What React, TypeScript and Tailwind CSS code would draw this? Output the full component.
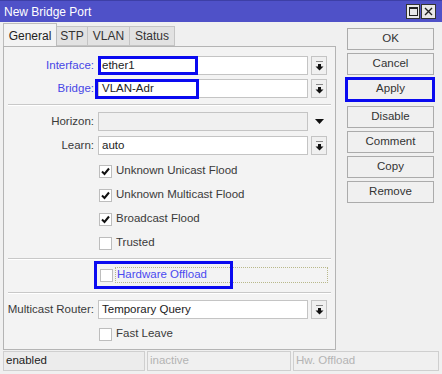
import React from 'react'

const DropButton = () => (
  <div className="ml-[3px] flex h-[19px] w-[16px] items-center justify-center border border-[#c4c4c4] bg-[#f0f0f0]">
    <svg width="9" height="10" viewBox="0 0 9 10">
      <rect x="1" y="0" width="7" height="1" fill="#8a8a8a" />
      <rect x="3" y="3" width="3" height="3" fill="#111" />
      <path d="M0.5 5.5 L8.5 5.5 L4.5 9.5 Z" fill="#111" />
    </svg>
  </div>
)

const Check = ({ checked }: { checked?: boolean }) => (
  <div className="flex h-[13px] w-[13px] items-center justify-center border border-[#bdbdbd] bg-white">
    {checked && (
      <svg width="9" height="9" viewBox="0 0 9 9">
        <path d="M1 4.5 L3.5 7 L8 1.5" stroke="#111" strokeWidth="2" fill="none" />
      </svg>
    )}
  </div>
)

const Sep = ({ className }: { className: string }) => (
  <div className={`mx-[4px] h-[2px] border-t border-[#c8c8c8] border-b border-b-white ${className}`} />
)

const Label = ({ text, blue }: { text: string; blue?: boolean }) => (
  <div
    className={`flex w-[94px] shrink-0 justify-end whitespace-nowrap pr-[4px] ${
      blue ? 'text-[#4646e6]' : 'text-[#3a3a3a]'
    }`}
  >
    {text}
  </div>
)

const Field = ({ value, disabled }: { value?: string; disabled?: boolean }) => (
  <div
    className={`flex h-[19px] w-[210px] items-center border border-[#c4c4c4] pl-[3px] text-[#222] ${
      disabled ? 'bg-[#f0f0f0]' : 'bg-white'
    }`}
  >
    {value}
  </div>
)

const CheckRow = ({ text, checked, className }: { text: string; checked?: boolean; className?: string }) => (
  <div className={`flex h-[24px] items-center pl-[95px] ${className ?? ''}`}>
    <Check checked={checked} />
    <span className="ml-[4px] text-[#3a3a3a]">{text}</span>
  </div>
)

const SideButton = ({ text }: { text: string }) => (
  <div className="flex h-[22px] w-[87px] items-center justify-center border border-[#ababab] bg-[#f0f0f0] text-[#333]">
    {text}
  </div>
)

export default function App() {
  return (
    <div className="flex h-[374px] w-[442px] flex-col overflow-hidden bg-[#f0f0f0] font-['Liberation_Sans',Arial,sans-serif] text-[11.5px] leading-none text-[#333]">
      {/* title bar */}
      <div className="flex h-[22px] items-center border-t border-[#3d3fa6] bg-[#4f51c8] pl-[4px] pr-[6px] text-white">
        <span className="text-[12px]">New Bridge Port</span>
        <div className="ml-auto flex gap-[1px]">
          <div className="flex h-[15px] w-[14px] items-center justify-center border border-[#333] bg-[#e8e8e8]">
            <div className="h-[9px] w-[9px] border border-t-2 border-[#222]" />
          </div>
          <div className="flex h-[15px] w-[15px] items-center justify-center border border-[#333] bg-[#e8e8e8]">
            <svg width="9" height="9" viewBox="0 0 9 9">
              <path d="M1 1 L8 8 M8 1 L1 8" stroke="#222" strokeWidth="1.4" />
            </svg>
          </div>
        </div>
      </div>

      <div className="flex h-[328px]">
        {/* left: tabs + panel */}
        <div className="ml-[3px] flex w-[333px] flex-col">
          <div className="flex h-[24px] items-end">
            <div className="-mb-[1px] flex h-[24px] w-[54px] items-center justify-center border border-b-0 border-[#bcbcbc] bg-[#f3f3f3] text-[12px] text-[#222]">
              General
            </div>
            <div className="flex h-[20px] w-[31px] items-center justify-center border border-l-0 border-[#c4c4c4] bg-[#e2e2e2] text-[12px] text-[#333]">
              STP
            </div>
            <div className="flex h-[20px] w-[42px] items-center justify-center border border-l-0 border-[#c4c4c4] bg-[#e2e2e2] text-[12px] text-[#333]">
              VLAN
            </div>
            <div className="flex h-[20px] w-[45px] items-center justify-center border border-l-0 border-[#c4c4c4] bg-[#e2e2e2] text-[12px] text-[#333]">
              Status
            </div>
          </div>

          <div className="flex h-[304px] flex-col border border-[#b4b4b4] bg-[#f3f3f3]">
            <div className="relative mt-[9px] flex h-[19px] items-center">
              <Label text="Interface:" blue />
              <Field value="ether1" />
              <DropButton />
              <div className="absolute left-[94px] top-0 h-[19px] w-[100px] border-[3px] border-[#0a0af0]" />
            </div>
            <div className="relative mt-[4px] flex h-[19px] items-center">
              <Label text="Bridge:" blue />
              <Field value="VLAN-Adr" />
              <DropButton />
              <div className="absolute left-[91px] top-0 h-[20px] w-[104px] border-[3px] border-[#0a0af0]" />
            </div>

            <Sep className="mt-[6px]" />

            <div className="mt-[6px] flex h-[19px] items-center">
              <Label text="Horizon:" />
              <Field disabled />
              <svg className="ml-[7px]" width="9" height="5" viewBox="0 0 9 5">
                <path d="M0 0 L9 0 L4.5 5 Z" fill="#111" />
              </svg>
            </div>
            <div className="mt-[5px] flex h-[19px] items-center">
              <Label text="Learn:" />
              <Field value="auto" />
              <DropButton />
            </div>

            <CheckRow className="mt-[4px]" text="Unknown Unicast Flood" checked />
            <CheckRow text="Unknown Multicast Flood" checked />
            <CheckRow text="Broadcast Flood" checked />
            <CheckRow text="Trusted" />

            <Sep className="mt-[3px]" />

            <div className="relative mt-[1px] flex h-[28px] items-center pl-[96px]">
              <Check />
              <div className="ml-[2px] flex h-[16px] w-[213px] items-center border border-dotted border-[#b8b88a] pl-[1px] text-[#4a4af0]">
                Hardware Offload
              </div>
              <div className="absolute left-[90px] top-0 h-[28px] w-[139px] border-[3px] border-[#0a0af0]" />
            </div>

            <Sep className="mt-[3px]" />

            <div className="mt-[6px] flex h-[19px] items-center">
              <Label text="Multicast Router:" />
              <Field value="Temporary Query" />
              <DropButton />
            </div>
            <CheckRow className="mt-[3px]" text="Fast Leave" />
          </div>
        </div>

        {/* right: buttons */}
        <div className="ml-[11px] flex w-[87px] flex-col gap-[3px] pt-[6px]">
          <SideButton text="OK" />
          <SideButton text="Cancel" />
          <div className="relative">
            <SideButton text="Apply" />
            <div className="absolute -left-[2px] -top-[1px] h-[25px] w-[90px] border-[3px] border-[#0a0af0]" />
          </div>
          <div className="mt-[3px]">
            <SideButton text="Disable" />
          </div>
          <SideButton text="Comment" />
          <SideButton text="Copy" />
          <SideButton text="Remove" />
        </div>
      </div>

      {/* status bar */}
      <div className="flex h-[24px] items-start gap-[2px] px-[3px] pt-[1px]">
        <div className="flex h-[20px] w-[142px] items-center border border-[#cfcfcf] bg-[#ececec] pl-[2px] text-[#222]">
          enabled
        </div>
        <div className="flex h-[20px] w-[144px] items-center border border-[#cfcfcf] bg-[#f0f0f0] pl-[2px] text-[#b4b4b4]">
          inactive
        </div>
        <div className="flex h-[20px] w-[146px] items-center border border-[#cfcfcf] bg-[#f0f0f0] pl-[2px] text-[#b4b4b4]">
          Hw. Offload
        </div>
      </div>
    </div>
  )
}
